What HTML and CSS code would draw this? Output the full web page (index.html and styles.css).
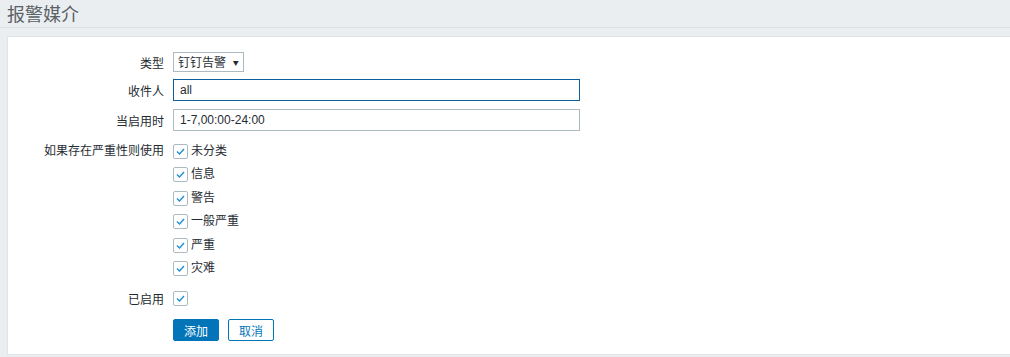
FILE: index.html
```html
<!DOCTYPE html>
<html>
<head>
  <meta charset="utf-8">
  <title>报警媒介</title>
  <link rel="stylesheet" href="styles.css">
</head>
<body>
  <div class="header">
    <h1>报警媒介</h1>
  </div>
  <div class="panel">
    <form class="media-form">
      <div class="form-row row-type">
        <label>类型</label>
        <div class="select">钉钉告警 <span class="arrow">▼</span></div>
      </div>
      <div class="form-row row-sendto">
        <label>收件人</label>
        <div class="input input-focus">all</div>
      </div>
      <div class="form-row row-period">
        <label>当启用时</label>
        <div class="input">1-7,00:00-24:00</div>
      </div>
      <div class="form-row row-severity">
        <label>如果存在严重性则使用</label>
        <ul class="check-list">
          <li><span class="checkbox"><svg width="9" height="7" viewBox="0 0 9 7"><path d="M1 3.5 L3.5 6 L8 1" fill="none" stroke="#1f8fd6" stroke-width="1.4"/></svg></span>未分类</li>
          <li><span class="checkbox"><svg width="9" height="7" viewBox="0 0 9 7"><path d="M1 3.5 L3.5 6 L8 1" fill="none" stroke="#1f8fd6" stroke-width="1.4"/></svg></span>信息</li>
          <li><span class="checkbox"><svg width="9" height="7" viewBox="0 0 9 7"><path d="M1 3.5 L3.5 6 L8 1" fill="none" stroke="#1f8fd6" stroke-width="1.4"/></svg></span>警告</li>
          <li><span class="checkbox"><svg width="9" height="7" viewBox="0 0 9 7"><path d="M1 3.5 L3.5 6 L8 1" fill="none" stroke="#1f8fd6" stroke-width="1.4"/></svg></span>一般严重</li>
          <li><span class="checkbox"><svg width="9" height="7" viewBox="0 0 9 7"><path d="M1 3.5 L3.5 6 L8 1" fill="none" stroke="#1f8fd6" stroke-width="1.4"/></svg></span>严重</li>
          <li><span class="checkbox"><svg width="9" height="7" viewBox="0 0 9 7"><path d="M1 3.5 L3.5 6 L8 1" fill="none" stroke="#1f8fd6" stroke-width="1.4"/></svg></span>灾难</li>
        </ul>
      </div>
      <div class="form-row row-active">
        <label>已启用</label>
        <div><span class="checkbox"><svg width="9" height="7" viewBox="0 0 9 7"><path d="M1 3.5 L3.5 6 L8 1" fill="none" stroke="#1f8fd6" stroke-width="1.4"/></svg></span></div>
      </div>
      <div class="form-row row-buttons">
        <span></span>
        <div class="buttons">
          <button type="button" class="btn btn-primary">添加</button>
          <button type="button" class="btn btn-alt">取消</button>
        </div>
      </div>
    </form>
  </div>
</body>
</html>
```

FILE: styles.css
```css
* {
  margin: 0;
  padding: 0;
  box-sizing: border-box;
}

body {
  font-family: "Liberation Sans", "Noto Sans CJK SC", sans-serif;
  font-size: 12px;
  color: #1f2c33;
  background-color: #ebeef0;
  overflow: hidden;
}

.header {
  height: 28px;
  padding-left: 7px;
  border-bottom: 1px solid #dce1e4;
}

.header h1 {
  font-family: "Noto Sans CJK SC", sans-serif;
  font-size: 18px;
  font-weight: normal;
  line-height: 26px;
  color: #5a6166;
}

.panel {
  margin-top: 8px;
  margin-left: 7px;
  margin-right: -10px;
  background-color: #ffffff;
  border: 1px solid #dfe4e7;
  padding: 15px 0 13px 0;
}

.form-row {
  display: grid;
  grid-template-columns: 156px 1fr;
  column-gap: 9px;
  align-items: center;
}

.form-row label {
  text-align: right;
}

.select {
  width: 71px;
  height: 20px;
  border: 1px solid #acbbc2;
  padding-left: 4px;
  line-height: 18px;
  font-family: "Noto Sans CJK SC", sans-serif;
}

.select .arrow {
  font-size: 6px;
  margin-left: 4px;
  vertical-align: 2px;
}

.input {
  width: 407px;
  height: 22px;
  border: 1px solid #acbbc2;
  padding-left: 6px;
  line-height: 20px;
}

.input-focus {
  border-color: #0d5e9d;
}

.row-sendto {
  margin-top: 7px;
}

.row-period {
  margin-top: 8px;
}

.row-severity {
  margin-top: 12px;
  align-items: start;
}

.row-severity label {
  line-height: 17px;
}

.check-list {
  list-style: none;
}

.check-list li {
  display: flex;
  height: 23.4px;
  align-items: flex-start;
  padding-top: 1px;
  line-height: 15px;
}

.checkbox {
  display: inline-flex;
  align-items: center;
  justify-content: center;
  width: 15px;
  height: 15px;
  border: 1px solid #acbbc2;
  border-radius: 2px;
  background-color: #ffffff;
  margin-right: 3px;
  vertical-align: middle;
}

.row-active {
  margin-top: 7px;
}

.row-active > div {
  height: 15px;
  display: flex;
}

.row-buttons {
  margin-top: 12px;
}

.buttons {
  display: flex;
  gap: 9px;
}

.btn {
  width: 46px;
  height: 22px;
  font-family: "Liberation Sans", "Noto Sans CJK SC", sans-serif;
  font-size: 12px;
  border-radius: 2px;
  border: 1px solid #0275b8;
  cursor: pointer;
}

.btn-primary {
  background-color: #0275b8;
  color: #ffffff;
}

.btn-alt {
  background-color: #ffffff;
  color: #0275b8;
}
```
